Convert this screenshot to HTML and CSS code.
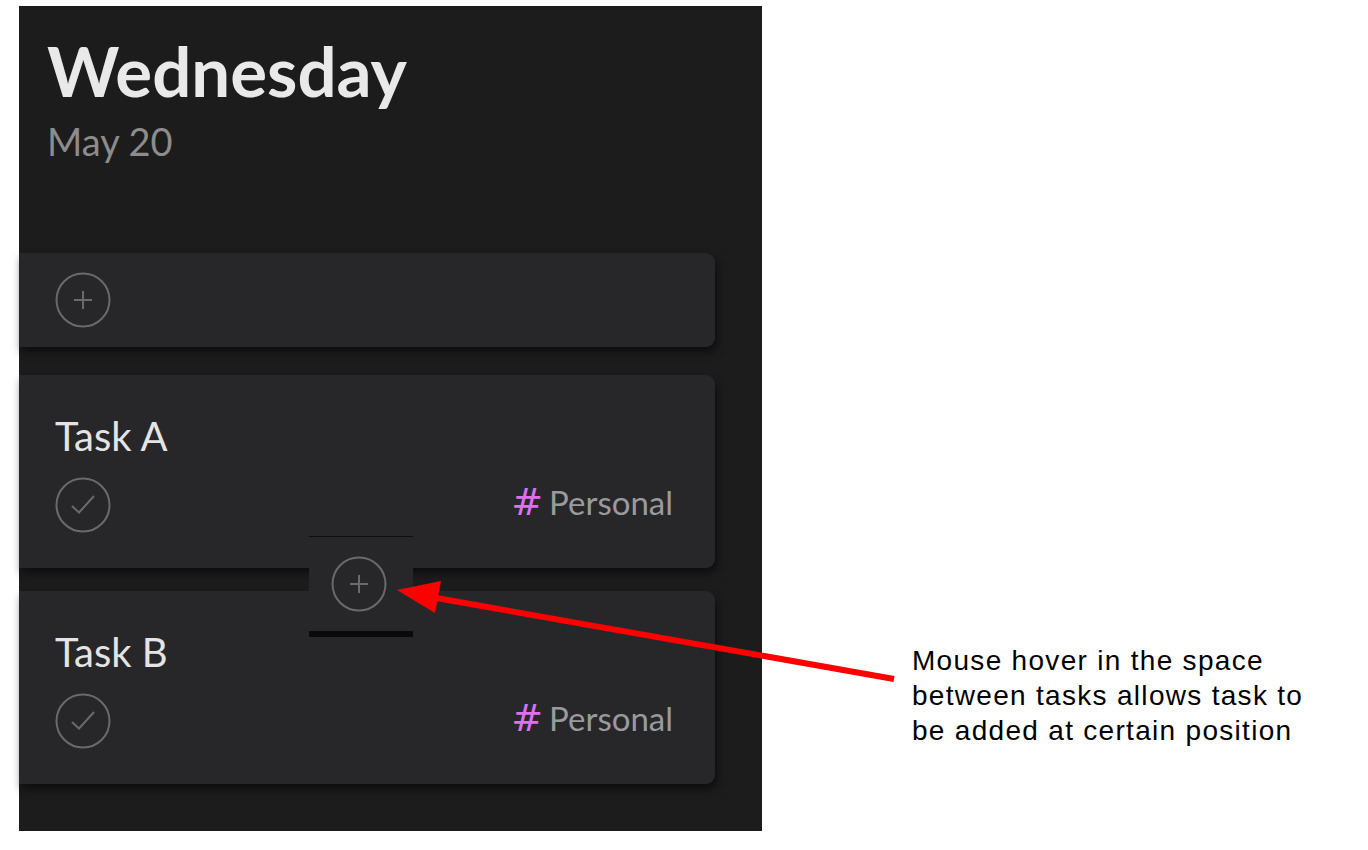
FILE: index.html
```html
<!DOCTYPE html>
<html lang="en">
<head>
  <meta charset="UTF-8">
  <title>Today - Add task between tasks</title>
  <link rel="stylesheet" href="styles.css">
</head>
<body>
  <div class="canvas">
    <div class="panel">
      <div class="day">
        <h1>Wednesday</h1>
        <div class="date">May 20</div>
      </div>

      <div class="tasks">
        <div class="card card-add">
          <svg class="icon" viewBox="0 0 56 56"><circle cx="28" cy="28" r="26.5"/><path d="M28 19v18M19 28h18"/></svg>
        </div>

        <div class="card task">
          <div class="title">Task A</div>
          <div class="row">
            <svg class="icon" viewBox="0 0 56 56"><circle cx="28" cy="28" r="26.5"/><path d="M17 29l7 6.5L39 19"/></svg>
            <div class="tag"><span class="hash">#</span>Personal</div>
          </div>
        </div>

        <div class="slot">
          <div class="slot-add">
            <svg class="icon" viewBox="0 0 56 56"><circle cx="28" cy="28" r="26.5"/><path d="M28 19v18M19 28h18"/></svg>
          </div>
        </div>

        <div class="card task">
          <div class="title">Task B</div>
          <div class="row">
            <svg class="icon" viewBox="0 0 56 56"><circle cx="28" cy="28" r="26.5"/><path d="M17 29l7 6.5L39 19"/></svg>
            <div class="tag"><span class="hash">#</span>Personal</div>
          </div>
        </div>
      </div>
    </div>

    <div class="note">Mouse hover in the space between tasks allows task to be added at certain position</div>

    <!-- annotation arrow -->
    <svg class="arrow" width="1368" height="850" viewBox="0 0 1368 850">
      <line x1="894" y1="679" x2="425" y2="596" stroke="#ff0000" stroke-width="6"/>
      <polygon points="397,590 441,581 435,613" fill="#ff0000"/>
    </svg>
  </div>
</body>
</html>
```

FILE: styles.css
```css
body {
  margin: 0;
  background: #ffffff;
  font-family: Lato, "Open Sans", sans-serif;
}
.canvas {
  position: relative;
  width: 1368px;
  height: 850px;
  display: flex;
  align-items: flex-start;
}
.panel {
  margin: 6px 0 0 19px;
  width: 743px;
  height: 825px;
  background: #1c1c1c;
  display: flex;
  flex-direction: column;
}
.day {
  padding: 23px 28px 0 28px;
  height: 217px;
  box-sizing: border-box;
}
h1 {
  margin: 0;
  font-size: 69px;
  font-weight: 700;
  line-height: 84px;
  color: #e9e9e9;
}
.date {
  margin-top: 6px;
  font-size: 38px;
  line-height: 44px;
  color: #8c8c8c;
}
.tasks {
  margin-top: 30px;
  width: 696px;
  display: flex;
  flex-direction: column;
}
.card {
  background: #272729;
  border-radius: 0 9px 9px 0;
  box-shadow: 2px 5px 8px rgba(0, 0, 0, 0.55);
  box-sizing: border-box;
}
.card-add {
  height: 94px;
  padding: 19px 36px;
  margin-bottom: 28px;
}
.icon {
  width: 56px;
  height: 56px;
  display: block;
  fill: none;
  stroke: #6a6a6c;
  stroke-width: 2;
}
.task {
  height: 193px;
  padding: 37px 42px 0 36px;
}
.title {
  font-size: 40px;
  line-height: 48px;
  color: #e4e4e4;
}
.row {
  margin-top: 17px;
  display: flex;
  align-items: center;
  justify-content: space-between;
}
.tag {
  font-size: 33px;
  line-height: 34px;
  margin-bottom: 6px;
  color: #9a9a9c;
}
.hash {
  font-family: "DejaVu Sans", sans-serif;
  font-size: 38px;
  line-height: 34px;
  color: #df6ff2;
  margin-right: 6px;
}
.slot {
  position: relative;
  height: 23px;
}
.slot-add {
  position: absolute;
  left: 290px;
  top: -32px;
  width: 100px;
  height: 94px;
  padding-right: 4px;
  background: #272729;
  border-top: 1px solid #0e0e0e;
  border-bottom: 6px solid #0a0a0a;
  display: flex;
  align-items: center;
  justify-content: center;
  z-index: 2;
}
.note {
  margin: 643px 0 0 150px;
  width: 400px;
  font-family: "Liberation Sans", Arial, sans-serif;
  font-size: 28px;
  line-height: 35px;
  letter-spacing: 1.3px;
  color: #000000;
}
.arrow {
  position: absolute;
  left: 0;
  top: 0;
  z-index: 3;
  pointer-events: none;
}
```
